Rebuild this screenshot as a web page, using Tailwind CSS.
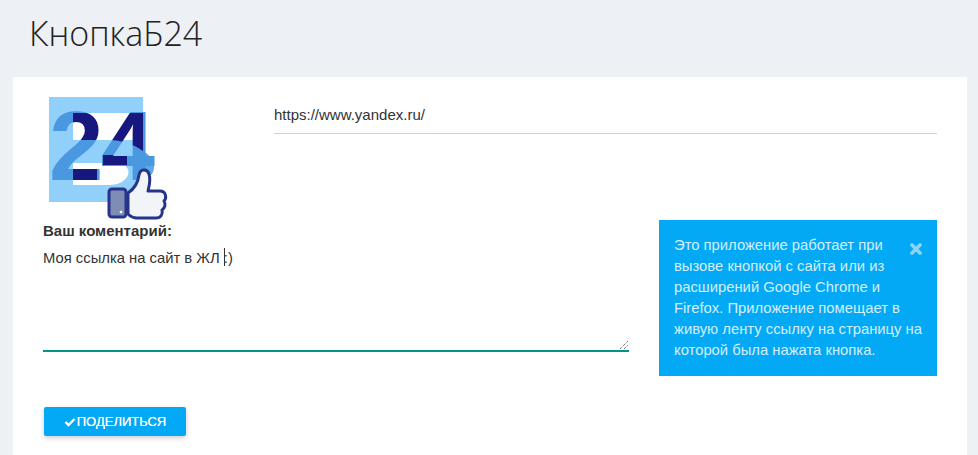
<!DOCTYPE html>
<html lang="ru">
<head>
  <meta charset="UTF-8" />
  <title>КнопкаБ24</title>
  <script src="https://cdn.jsdelivr.net/npm/@tailwindcss/browser@4"></script>
</head>
<body class="bg-[#edf0f4] font-['Liberation_Sans',sans-serif] text-[#333] h-[455px] overflow-hidden">
  <h1 class="font-['Open_Sans',sans-serif] font-light text-[34px] leading-[50px] text-[#222] pl-[29px] pt-[8px] h-[77px]">КнопкаБ24</h1>

  <main class="ml-[13px] mr-[11px] bg-white h-[378px] pl-[30px] pr-[30px] pt-[20px]">
    <div class="flex">
      <!-- logo -->
      <div class="w-[231px] shrink-0">
        <svg width="125" height="125" viewBox="0 0 125 125" class="ml-[6px] overflow-visible">
          <defs>
            <pattern id="digits" patternUnits="userSpaceOnUse" width="125" height="125">
              <rect width="125" height="125" fill="#4a98df" />
              <path d="M24 16 H94 V54 C84 47 72 43 60 43 H24 Z" fill="#16187f" />
              <rect x="24" y="70" width="24" height="14" fill="#16187f" />
              <rect x="54" y="58" width="24" height="10" fill="#16187f" />
            </pattern>
          </defs>
          <rect width="94" height="105" fill="#90d0fb" />
          <path d="M24 16 H94 V43 H24 Z" fill="#fff" />
          <path d="M24 66 H66 C78 66 81 74 79 78 C76 85 68 88 60 88 H24 Z" fill="#fff" />
          <!-- swoosh behind the digits -->
          <path d="M94 54 C101 58 105 64 105 70 C105 73 104 76 102 78 H94 Z" fill="#5da8e6" />
          <text x="0" y="83" font-family="Liberation Sans" font-weight="700" font-size="98" fill="url(#digits)" textLength="106">24</text>
          <rect x="60" y="92" width="17" height="28" rx="3" fill="#7f8db5" stroke="#27348b" stroke-width="3" />
          <circle cx="72" cy="115" r="1.3" fill="#fff" />
          <path d="M79 96 C85 92 89 86 90 78 C91 72 98 71 100 77 C102 83 100 90 99 94 H111 C117 94 118 101 115 104 C117 107 116 111 113 113 C114 117 112 121 107 121 H88 C84 121 81 119 79 117 Z" fill="#f2f5f7" stroke="#27348b" stroke-width="3" stroke-linejoin="round" />
        </svg>
      </div>
      <div class="flex-1 border-b border-[#d0d0d0] h-[37px] text-[15px] leading-[35px]">https://www.yandex.ru/</div>
    </div>

    <div class="flex -mt-[1px]">
      <div class="w-[586px] shrink-0">
        <div class="text-[15px] leading-[20px] font-bold">Ваш коментарий:</div>
        <div class="relative h-[111px] border-b-2 border-[#009688] text-[14.8px] leading-[20px] pt-[7px]">
          Моя ссылка на сайт в ЖЛ <span class="inline-block w-px h-[18px] bg-[#333] align-text-bottom -mr-px"></span>:)
          <svg width="10" height="10" viewBox="0 0 10 10" class="absolute right-0 bottom-0 stroke-[#444]">
            <path d="M1 9 L9 1 M5 9 L9 5" stroke-dasharray="1 1" />
          </svg>
        </div>
      </div>
      <aside class="ml-[30px] -mt-[1px] w-[278px] h-[156px] bg-[#03a9f4] text-[#d4effd] text-[14.8px] leading-[21px] pl-[15px] pr-[14px] pt-[15px]">
        <svg width="12" height="12" viewBox="0 0 12 12" class="float-right mt-[8px] mr-[1px] ml-[10px]">
          <path d="M2 2 L10 10 M10 2 L2 10" stroke="#8ad4f8" stroke-width="3.6" stroke-linecap="round" />
        </svg>
        Это приложение работает при вызове кнопкой с сайта или из расширений Google Chrome и Firefox. Приложение помещает в живую ленту ссылку на страницу на которой была нажата кнопка.
      </aside>
    </div>

    <button class="flex items-center justify-center ml-[1px] mt-[31px] w-[142px] h-[29px] rounded-[2px] bg-[#03a9f4] text-white text-[13px] font-normal [text-shadow:0_0_0.5px_#fff] shadow-[0_2px_5px_rgba(0,0,0,0.2)]">
      <svg width="12" height="10" viewBox="0 0 12 10" class="mr-px">
        <path d="M1.5 5 L4.5 8 L10.5 2" fill="none" stroke="#fff" stroke-width="2.4" />
      </svg>
      ПОДЕЛИТЬСЯ
    </button>
  </main>
</body>
</html>
